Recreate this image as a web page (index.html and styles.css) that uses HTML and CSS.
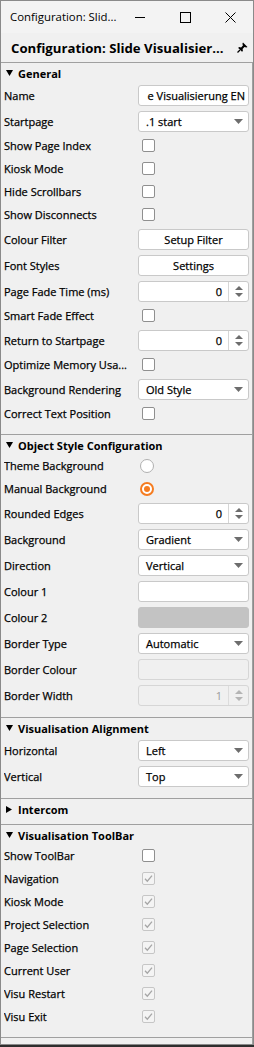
FILE: index.html
```html
<!DOCTYPE html>
<html lang="en">
<head>
    <meta charset="UTF-8">
    <meta name="viewport" content="width=device-width, initial-scale=1.0">
    <title>Configuration: Slide Visualisierung EN</title>
    <link rel="stylesheet" href="styles.css">
</head>
<body>
<div class="window">
    <!-- title bar -->
    <div class="titlebar">
        <span class="title">Configuration: Slid...</span>
        <div class="winbtns">
            <span class="winbtn"><svg width="11" height="11" viewBox="0 0 11 11"><line x1="0" y1="5.5" x2="10" y2="5.5" stroke="#000" stroke-width="1"/></svg></span>
            <span class="winbtn"><svg width="11" height="11" viewBox="0 0 11 11"><rect x="0.5" y="0.5" width="10" height="10" fill="none" stroke="#000" stroke-width="1"/></svg></span>
            <span class="winbtn"><svg width="11" height="11" viewBox="0 0 11 11"><path d="M0.5 0.5 L10.5 10.5 M10.5 0.5 L0.5 10.5" stroke="#000" stroke-width="1"/></svg></span>
        </div>
    </div>

    <div class="docbar">
        <span class="doctitle">Configuration: Slide Visualisier...</span>
        <svg class="pin" width="11" height="11" viewBox="0 0 11 11">
            <path d="M6 0.5 L10.5 5 L9.3 5.6 L7.4 5.1 L5.6 6.9 L5.9 9 L5 9.8 L1.2 6 L2 5.1 L4.1 5.4 L5.9 3.6 L5.4 1.7 Z" fill="#000"/>
            <line x1="3" y1="8" x2="0.5" y2="10.5" stroke="#000" stroke-width="1.2"/>
        </svg>
    </div>

    <div class="panel">
        <!-- General -->
        <section class="group">
            <div class="group-head"><svg class="caret" width="8" height="7" viewBox="0 0 8 7"><polygon points="0,0 7,0 3.5,6" fill="#000"/></svg>General</div>
            <div class="row"><span class="label">Name</span><div class="field text"><span>e Visualisierung EN</span></div></div>
            <div class="row"><span class="label">Startpage</span><div class="field select"><span>.1 start</span><svg class="arrow" width="9" height="5" viewBox="0 0 9 5"><polygon points="0,0 9,0 4.5,5" fill="#6d6d6d"/></svg></div></div>
            <div class="row short"><span class="label">Show Page Index</span><span class="check"></span></div>
            <div class="row short"><span class="label">Kiosk Mode</span><span class="check"></span></div>
            <div class="row short"><span class="label">Hide Scrollbars</span><span class="check"></span></div>
            <div class="row short"><span class="label">Show Disconnects</span><span class="check"></span></div>
            <div class="row"><span class="label">Colour Filter</span><div class="field button">Setup Filter</div></div>
            <div class="row"><span class="label">Font Styles</span><div class="field button">Settings</div></div>
            <div class="row"><span class="label">Page Fade Time (ms)</span><div class="field spin"><span class="value">0</span><span class="spinbtns"><svg width="8" height="11" viewBox="0 0 8 11"><polygon points="0,4 8,4 4,0" fill="#6d6d6d"/><polygon points="0,7 8,7 4,11" fill="#6d6d6d"/></svg></span></div></div>
            <div class="row short"><span class="label">Smart Fade Effect</span><span class="check"></span></div>
            <div class="row"><span class="label">Return to Startpage</span><div class="field spin"><span class="value">0</span><span class="spinbtns"><svg width="8" height="11" viewBox="0 0 8 11"><polygon points="0,4 8,4 4,0" fill="#6d6d6d"/><polygon points="0,7 8,7 4,11" fill="#6d6d6d"/></svg></span></div></div>
            <div class="row short"><span class="label">Optimize Memory Usa...</span><span class="check"></span></div>
            <div class="row"><span class="label">Background Rendering</span><div class="field select"><span>Old Style</span><svg class="arrow" width="9" height="5" viewBox="0 0 9 5"><polygon points="0,0 9,0 4.5,5" fill="#6d6d6d"/></svg></div></div>
            <div class="row short"><span class="label">Correct Text Position</span><span class="check"></span></div>
        </section>

        <!-- Object Style Configuration -->
        <section class="group">
            <div class="group-head"><svg class="caret" width="8" height="7" viewBox="0 0 8 7"><polygon points="0,0 7,0 3.5,6" fill="#000"/></svg>Object Style Configuration</div>
            <div class="row short"><span class="label">Theme Background</span><span class="radio"></span></div>
            <div class="row short"><span class="label">Manual Background</span><span class="radio on"></span></div>
            <div class="row"><span class="label">Rounded Edges</span><div class="field spin"><span class="value">0</span><span class="spinbtns"><svg width="8" height="11" viewBox="0 0 8 11"><polygon points="0,4 8,4 4,0" fill="#6d6d6d"/><polygon points="0,7 8,7 4,11" fill="#6d6d6d"/></svg></span></div></div>
            <div class="row"><span class="label">Background</span><div class="field select"><span>Gradient</span><svg class="arrow" width="9" height="5" viewBox="0 0 9 5"><polygon points="0,0 9,0 4.5,5" fill="#6d6d6d"/></svg></div></div>
            <div class="row"><span class="label">Direction</span><div class="field select"><span>Vertical</span><svg class="arrow" width="9" height="5" viewBox="0 0 9 5"><polygon points="0,0 9,0 4.5,5" fill="#6d6d6d"/></svg></div></div>
            <div class="row"><span class="label">Colour 1</span><div class="field"></div></div>
            <div class="row"><span class="label">Colour 2</span><div class="field swatch"></div></div>
            <div class="row"><span class="label">Border Type</span><div class="field select"><span>Automatic</span><svg class="arrow" width="9" height="5" viewBox="0 0 9 5"><polygon points="0,0 9,0 4.5,5" fill="#6d6d6d"/></svg></div></div>
            <div class="row"><span class="label">Border Colour</span><div class="field disabled"></div></div>
            <div class="row"><span class="label">Border Width</span><div class="field spin disabled"><span class="value">1</span><span class="spinbtns"><svg width="8" height="11" viewBox="0 0 8 11"><polygon points="0,4 8,4 4,0" fill="#b4b4b4"/><polygon points="0,7 8,7 4,11" fill="#b4b4b4"/></svg></span></div></div>
        </section>

        <!-- Visualisation Alignment -->
        <section class="group">
            <div class="group-head"><svg class="caret" width="8" height="7" viewBox="0 0 8 7"><polygon points="0,0 7,0 3.5,6" fill="#000"/></svg>Visualisation Alignment</div>
            <div class="row"><span class="label">Horizontal</span><div class="field select"><span>Left</span><svg class="arrow" width="9" height="5" viewBox="0 0 9 5"><polygon points="0,0 9,0 4.5,5" fill="#6d6d6d"/></svg></div></div>
            <div class="row"><span class="label">Vertical</span><div class="field select"><span>Top</span><svg class="arrow" width="9" height="5" viewBox="0 0 9 5"><polygon points="0,0 9,0 4.5,5" fill="#6d6d6d"/></svg></div></div>
        </section>

        <!-- Intercom (collapsed) -->
        <section class="group collapsed">
            <div class="group-head"><svg class="caret" width="8" height="8" viewBox="0 0 8 8"><polygon points="0,0 6,3.5 0,7" fill="#000"/></svg>Intercom</div>
        </section>

        <!-- Visualisation ToolBar -->
        <section class="group">
            <div class="group-head"><svg class="caret" width="8" height="7" viewBox="0 0 8 7"><polygon points="0,0 7,0 3.5,6" fill="#000"/></svg>Visualisation ToolBar</div>
            <div class="row short"><span class="label">Show ToolBar</span><span class="check"></span></div>
            <div class="row short"><span class="label">Navigation</span><span class="check off"><svg width="11" height="11" viewBox="0 0 11 11"><path d="M2 5.8 L4.3 8.2 L9 2.6" fill="none" stroke="#a6a6a6" stroke-width="1.3"/></svg></span></div>
            <div class="row short"><span class="label">Kiosk Mode</span><span class="check off"><svg width="11" height="11" viewBox="0 0 11 11"><path d="M2 5.8 L4.3 8.2 L9 2.6" fill="none" stroke="#a6a6a6" stroke-width="1.3"/></svg></span></div>
            <div class="row short"><span class="label">Project Selection</span><span class="check off"><svg width="11" height="11" viewBox="0 0 11 11"><path d="M2 5.8 L4.3 8.2 L9 2.6" fill="none" stroke="#a6a6a6" stroke-width="1.3"/></svg></span></div>
            <div class="row short"><span class="label">Page Selection</span><span class="check off"><svg width="11" height="11" viewBox="0 0 11 11"><path d="M2 5.8 L4.3 8.2 L9 2.6" fill="none" stroke="#a6a6a6" stroke-width="1.3"/></svg></span></div>
            <div class="row short"><span class="label">Current User</span><span class="check off"><svg width="11" height="11" viewBox="0 0 11 11"><path d="M2 5.8 L4.3 8.2 L9 2.6" fill="none" stroke="#a6a6a6" stroke-width="1.3"/></svg></span></div>
            <div class="row short"><span class="label">Visu Restart</span><span class="check off"><svg width="11" height="11" viewBox="0 0 11 11"><path d="M2 5.8 L4.3 8.2 L9 2.6" fill="none" stroke="#a6a6a6" stroke-width="1.3"/></svg></span></div>
            <div class="row short"><span class="label">Visu Exit</span><span class="check off"><svg width="11" height="11" viewBox="0 0 11 11"><path d="M2 5.8 L4.3 8.2 L9 2.6" fill="none" stroke="#a6a6a6" stroke-width="1.3"/></svg></span></div>
        </section>
    </div>
</div>
</body>
</html>
```

FILE: styles.css
```css
* {
    box-sizing: border-box;
}
body {
    margin: 0;
    background-color: #2e2e2e;
    font-family: "Open Sans", "Noto Sans", sans-serif;
    font-size: 11px;
    color: #000;
    -webkit-text-stroke: 0.25px #000; /* heavier, like ClearType text */
}
.window {
    width: 254px;
    height: 1045px;
    background-color: #f0f0f0;
    border: 1px solid #8a8a8a;
    display: flex;
    flex-direction: column;
}

/* title bar */
.titlebar {
    height: 32px;
    display: flex;
    align-items: center;
    padding-left: 9px;
    background-color: #f3f3f3;
}
.title {
    flex: 1;
    padding-bottom: 1px;
    font-size: 11.4px;
    -webkit-text-stroke: 0;
}
.winbtns {
    display: flex;
}
.winbtn {
    width: 45px;
    height: 31px;
    display: flex;
    align-items: center;
    justify-content: center;
}
.winbtn svg {
    display: block;
}
.docbar {
    height: 29px;
    display: flex;
    align-items: center;
    justify-content: space-between;
    padding: 0 5px 0 10px;
}
.doctitle {
    font-weight: bold;
    font-size: 13.2px;
    -webkit-text-stroke: 0;
}
.pin {
    display: block;
}

/* property panel */
.panel {
    flex: 1;
    border-top: 1px solid #a0a0a0;
    border-right: 1px solid #a0a0a0;
}
.group {
    padding-bottom: 9px;
    border-bottom: 1px solid #a0a0a0;
}
.group.collapsed {
    padding-bottom: 6px;
}
.group-head {
    height: 19px;
    display: flex;
    align-items: center;
    padding: 2px 0 0 5px;
    font-weight: bold;
    -webkit-text-stroke: 0;
}
.caret {
    display: block;
    margin-right: 4px;
}
.row {
    height: 26px;
    display: grid;
    grid-template-columns: 134px 111px;
    align-items: center;
    padding-left: 3px;
}
.row.short {
    height: 23px;
}
.label {
    white-space: nowrap;
    overflow: hidden;
}

/* inputs */
.field {
    height: 21px;
    border: 1px solid #c9c9c9;
    border-radius: 3px;
    background-color: #fff;
    display: flex;
    align-items: center;
    overflow: hidden;
    white-space: nowrap;
}
.text {
    justify-content: flex-end;
    padding-right: 3px;
}
.select {
    justify-content: space-between;
    padding: 0 5px 0 7px;
}
.arrow {
    display: block;
}
.button {
    justify-content: center;
}
.spin .value {
    flex: 1;
    text-align: right;
    padding-right: 6px;
}
.spinbtns {
    width: 20px;
    height: 100%;
    border-left: 1px solid #d6d6d6;
    display: flex;
    align-items: center;
    justify-content: center;
}
.spinbtns svg {
    display: block;
}
.swatch {
    background-color: #c3c3c3;
    border-color: #c3c3c3;
}
.field.disabled {
    background-color: #f0f0f0;
    border-color: #d6d6d6;
    color: #9a9a9a;
    -webkit-text-stroke: 0;
}
.field.disabled .spinbtns {
    border-left-color: #dcdcdc;
}

/* check boxes and radios */
.check {
    width: 13px;
    height: 13px;
    margin-left: 4px;
    border: 1px solid #8f8f8f;
    border-radius: 2px;
    background-color: #fff;
    display: flex;
    align-items: center;
    justify-content: center;
}
.check.off {
    border-color: #c6c6c6;
    background-color: #f4f4f4;
}
.check svg {
    display: block;
}
.radio {
    width: 14px;
    height: 14px;
    margin-left: 2px;
    border: 1px solid #b0b0b0;
    border-radius: 50%;
    background-color: #fff;
    display: flex;
    align-items: center;
    justify-content: center;
}
.radio.on {
    border: 2px solid #f57c20;
}
.radio.on::after {
    content: "";
    width: 6px;
    height: 6px;
    border-radius: 50%;
    background-color: #f57c20;
}
```
